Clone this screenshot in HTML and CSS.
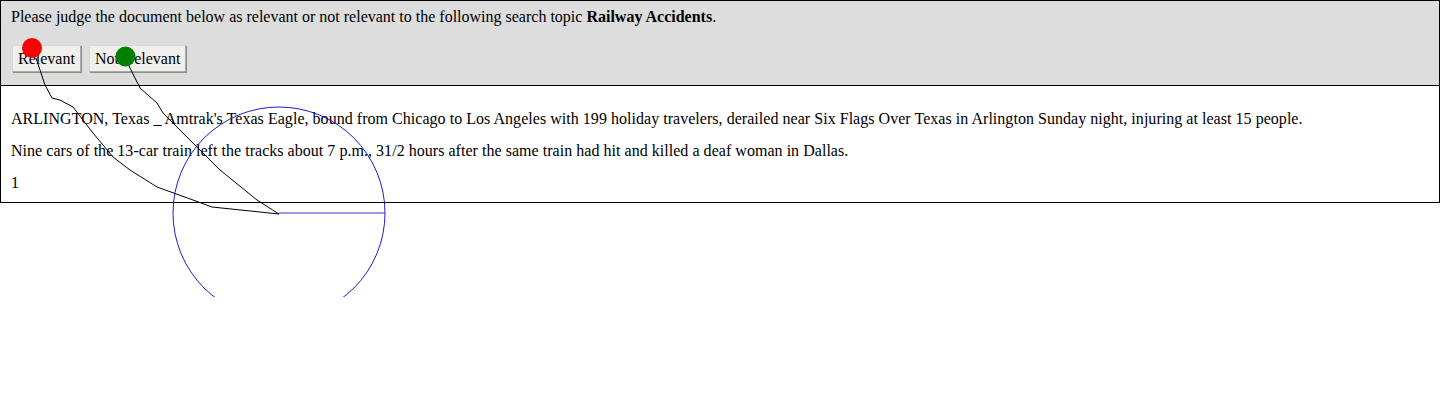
FILE: index.html
```html
<!DOCTYPE html>
<html>
<head>
<meta charset="utf-8">
<link rel="stylesheet" href="styles.css">
</head>
<body>
<div class="frame">
  <div class="judge">
    <div class="prompt">Please judge the document below as relevant or not relevant to the following search topic <b>Railway Accidents</b>.</div>
    <div class="actions">
      <button class="btn">Relevant</button>
      <button class="btn">Not relevant</button>
    </div>
  </div>
  <div class="doc">
    <p>ARLINGTON, Texas _ Amtrak's Texas Eagle, bound from Chicago to Los Angeles with 199 holiday travelers, derailed near Six Flags Over Texas in Arlington Sunday night, injuring at least 15 people.</p>
    <p>Nine cars of the 13-car train left the tracks about 7 p.m., 31/2 hours after the same train had hit and killed a deaf woman in Dallas.</p>
    <p>1</p>
  </div>
</div>
<svg class="overlay" width="1440" height="297" viewBox="0 0 1440 297">
  <circle cx="279" cy="213" r="106" fill="none" stroke="#1c1ccc" stroke-width="1"/>
  <line x1="279" y1="213" x2="385" y2="213" stroke="#3333cc" stroke-width="1"/>
  <polyline fill="none" stroke="#000" stroke-width="1" points="36,58 45,85 52,98 60,100 73,107 93,133 113,157 130,170 157,187 193,200 212,207 279,214"/>
  <polyline fill="none" stroke="#000" stroke-width="1" points="125,57 130,68 140,88 157,103 163,113 220,170 257,200 279,214"/>
  <circle cx="32" cy="48" r="10" fill="#ff0000"/>
  <circle cx="125.5" cy="56.5" r="10" fill="#008000"/>
</svg>
</body>
</html>
```

FILE: styles.css
```css
html, body {
  margin: 0;
  padding: 0;
  background: #fff;
}
body {
  font-family: "Liberation Serif", "Times New Roman", serif;
  font-size: 16px;
  line-height: 18px;
  color: #000;
}
.frame {
  border: 1px solid #000;
  width: 1438px;
}
.judge {
  background: #dddddd;
  border-bottom: 1px solid #000;
  padding: 7px 10px 12px 10px;
  height: 65px;
}
.prompt {
  height: 18px;
}
.actions {
  display: flex;
  gap: 8px;
  margin-top: 19px;
  margin-left: 1px;
}
.btn {
  font-family: "Liberation Serif", "Times New Roman", serif;
  font-size: 16px;
  line-height: 18px;
  word-spacing: 6px;
  color: #000;
  background: #f0efeb;
  border: 1px solid #a9a9a9;
  border-top-color: #d8d8d8;
  border-left-color: #d8d8d8;
  box-shadow: 1px 1px 0 #8c8c8c;
  padding: 4px 5px 4px 5px;
  height: 27px;
  margin: 0;
}
.doc {
  padding: 24px 10px 10px 10px;
  display: flex;
  flex-direction: column;
  gap: 14px;
  letter-spacing: 0.035px;
}
.doc p {
  margin: 0;
}
.overlay {
  position: absolute;
  left: 0;
  top: 0;
  pointer-events: none;
}
```
